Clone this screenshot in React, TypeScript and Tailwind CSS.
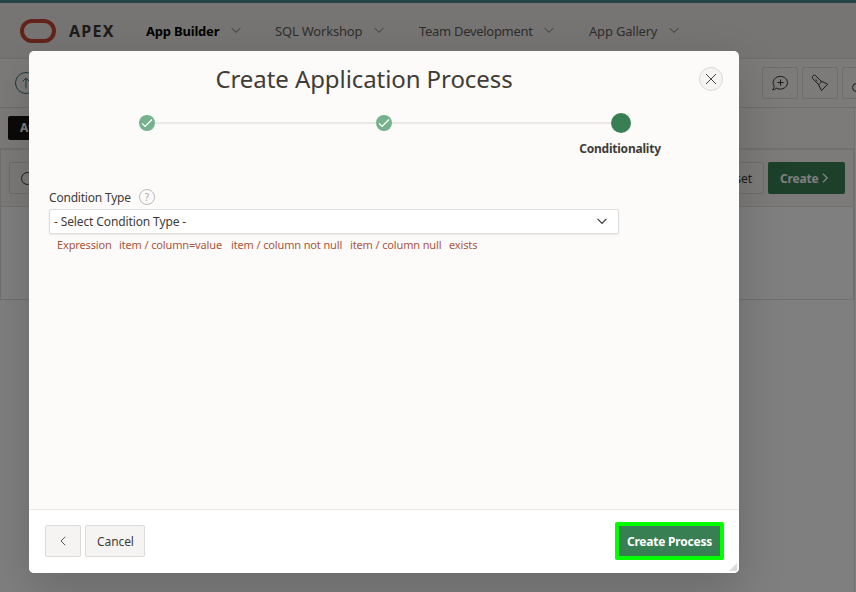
import React from "react";

function Chevron({ className = "" }: { className?: string }) {
  return (
    <svg className={className} width="10" height="7" viewBox="0 0 10 7" fill="none" stroke="currentColor">
      <path d="M.8 1.2 5 5.4l4.200-4.200" />
    </svg>
  );
}

function NavItem({ label, className, text }: { label: string; className: string; text: string }) {
  return (
    <div className={`flex shrink-0 items-center justify-between ${className}`}>
      <span className={`text-[13px] leading-5 whitespace-nowrap ${text}`}>{label}</span>
      <Chevron className="text-[#6f6c69]" />
    </div>
  );
}

function ToolButton({ children }: { children: React.ReactNode }) {
  return (
    <div className="flex h-8 w-9 shrink-0 items-center justify-center rounded-[2px] border border-[#dedbd8] bg-[#f8f6f4] text-[#383532]">
      {children}
    </div>
  );
}

function DoneStep() {
  return (
    <svg className="shrink-0" width="16" height="16" viewBox="0 0 16 16">
      <circle cx="8" cy="8" r="8" fill="#75b18d" />
      <path d="M3 8.400 6.100 11.400 13 4.500" fill="none" stroke="#fff" strokeWidth="1.300" />
    </svg>
  );
}

function Page() {
  return (
    <div className="flex h-full w-full flex-col bg-white">
      <div className="h-[3px] shrink-0 bg-[#4c868f]" />
      <header className="flex h-14 shrink-0 items-center border-b border-[#e0dcd8] bg-[#eeebe8] pl-5">
        <div className="h-6 w-9 rounded-full border-4 border-[#c74634]" />
        <span className="ml-[13px] w-[77px] text-base leading-6 font-bold tracking-[1.3px] text-[#3c3835]">APEX</span>
        <NavItem label="App Builder" className="w-[95px]" text="font-bold text-black tracking-[-0.2px]" />
        <NavItem label="SQL Workshop" className="ml-[34px] w-[109px]" text="text-[#5f5b57] tracking-[-0.2px]" />
        <NavItem label="Team Development" className="ml-[35px] w-[135px]" text="text-[#5f5b57] tracking-[-0.3px]" />
        <NavItem label="App Gallery" className="ml-[35px] w-[90px]" text="text-[#5f5b57] tracking-[-0.2px]" />
      </header>
      <div className="flex h-[49px] shrink-0 items-center justify-between overflow-hidden border-b border-[#e0dcd9] bg-[#f9f7f5] pl-[15px]">
        <div className="flex size-[22px] items-center justify-center rounded-full border border-[#39717b] text-[#39717b]">
          <svg width="10" height="12" viewBox="0 0 10 12" fill="none" stroke="currentColor">
            <path d="M5 11.500V1M1.500 4.500 5 1l3.500 3.500" />
          </svg>
        </div>
        <div className="flex w-[94px] gap-1">
          <ToolButton>
            <svg width="16" height="16" viewBox="0 0 16 16" fill="none" stroke="currentColor" strokeLinejoin="round">
              <path d="M2.300 11.200C1.300 9.800.9 8.500 1.200 6.700 1.800 3.600 4.600 1.400 8.200 1.400c4.100 0 7.300 2.800 7.300 6.300s-3.200 6.400-7.300 6.400c-1.400 0-2.600-.3-3.700-.9-1.100.9-2.400 1.500-3.900 1.600.8-.9 1.600-2.200 1.700-3.600zM8.500 4.500v6M5.500 7.500h6" />
            </svg>
          </ToolButton>
          <ToolButton>
            <svg width="18" height="18" viewBox="0 0 18 18" fill="none" stroke="currentColor" strokeLinejoin="round">
              <path d="M1.600 4.500 7.300 10.200 10.500 16.600 16.600 10.200 10.200 7.100 4.500 1.600C2.600.3.500 2.500 1.600 4.500zM7.300 10.200C9.100 10.100 10.100 9 10.200 7.100M4.700 5.400l1.800 1.800" />
            </svg>
          </ToolButton>
          <div className="flex h-8 w-9 shrink-0 items-center rounded-[2px] border border-[#dedbd8] bg-[#f8f6f4] pt-2 pl-[9px]">
            <div className="size-[9px] rounded-full border border-[#383532]" />
          </div>
        </div>
      </div>
      <div className="min-h-0 flex-1 pr-[1px]">
        <div className="h-full border-r border-[#e6e3e0]">
          <div className="flex h-10 items-center bg-[#f9f7f5] pl-2">
            <div className="flex h-6 w-20 items-center rounded-[2px] bg-[#161513] pl-3 text-xs font-bold text-white">Attributes</div>
          </div>
          <section className="h-[152px] border-t-2 border-r border-b border-l border-[#e3e0dd]">
            <div className="flex h-[57px] items-center justify-between border-b border-[#e3e0dd] bg-[#f9f7f5] pr-2 pl-2">
              <div className="flex h-8 w-48 items-center rounded-[2px] border border-[#dedbd8] pl-[11px]">
                <div className="size-[13px] rounded-full border border-[#383532]" />
              </div>
              <div className="flex gap-1">
                <div className="flex h-8 w-16 items-center justify-end rounded-[2px] border border-[#dedbd8] pt-px pr-[11px] text-xs text-[#383532]">Reset</div>
                <div className="flex h-8 w-[77px] items-center gap-1 rounded-[2px] bg-[#388054] pl-3 text-xs font-bold text-white">
                  <span className="w-[38px] pt-px tracking-[-0.2px]">Create</span>
                  <svg width="7" height="10" viewBox="0 0 7 10" fill="none" stroke="currentColor" strokeWidth="1.400">
                    <path d="m1 .8 4.200 4.200L1 9.200" />
                  </svg>
                </div>
              </div>
            </div>
          </section>
        </div>
      </div>
    </div>
  );
}

function Dialog() {
  return (
    <div className="absolute top-[51px] left-[29px] flex h-[522px] w-[710px] flex-col overflow-hidden rounded-[5px] bg-[#fcfbfa] text-xs text-[#403c38] shadow-[0_16px_48px_rgba(0,0,0,0.18)]">
      <div className="grid h-14 shrink-0 grid-cols-[48px_1fr_48px] items-center">
        <h1 className="col-start-2 text-center text-2xl leading-8 tracking-[-0.08px] whitespace-nowrap">
          <span className="relative -left-[20px]">Create Application Process</span>
        </h1>
        <button className="ml-2 flex size-6 items-center justify-center rounded-full border border-[#dcdad7] bg-[#f5f4f2]">
          <svg width="12" height="12" viewBox="0 0 12 12" stroke="#4a4642">
            <path d="m1 1 10 10M11 1 1 11" />
          </svg>
        </button>
      </div>
      <div className="mt-[6px] flex h-5 shrink-0 items-center pr-[108px] pl-[110px]">
        <DoneStep />
        <div className="h-[2px] w-[221px] bg-[#ebe9e6]" />
        <DoneStep />
        <div className="h-[2px] flex-1 bg-[#ebe9e6]" />
        <div className="size-5 rounded-full bg-[#388054]" />
      </div>
      <div className="mt-[6px] ml-[531px] h-5 w-[120px] text-center leading-5 font-bold tracking-[-0.22px]">Conditionality</div>
      <div className="mt-[26px] ml-5 flex h-6 items-center">
        <label className="w-[90px] pt-px tracking-[-0.2px] whitespace-nowrap">Condition Type</label>
        <span className="flex size-4 items-center justify-center rounded-full border border-[#bcbab7] text-[10px] leading-none text-[#a9a6a3]">?</span>
      </div>
      <div className="ml-5 flex h-[25px] w-[570px] shrink-0 items-center justify-between rounded-[2px] border border-[#dfdddb] bg-white pr-[11px] pl-[4px] shadow-[0_1px_2px_rgba(0,0,0,0.08)]">
        <span className="tracking-[-0.12px]">- Select Condition Type -</span>
        <svg width="10" height="7" viewBox="0 0 10 7" fill="none" stroke="#393632" strokeWidth="1.200">
          <path d="M.6.900 5 5.300 9.400.9" />
        </svg>
      </div>
      <div className="mt-[3px] ml-7 flex h-4 text-[11px] leading-4 tracking-[-0.14px] whitespace-nowrap text-[#aa563a]">
        <span className="w-[62px]">Expression</span>
        <span className="w-[112px]">item / column=value</span>
        <span className="w-[119px]">item / column not null</span>
        <span className="w-[99px]">item / column null</span>
        <span>exists</span>
      </div>
      <footer className="mt-auto flex h-16 shrink-0 items-center gap-1 border-t border-[#e9e6e3] bg-white pr-[15px] pb-[2px] pl-4">
        <button className="flex h-8 w-9 items-center justify-center rounded-[2px] border border-[#dcdad8] bg-[#f5f4f2]">
          <svg width="6" height="10" viewBox="0 0 6 10" fill="none" stroke="#5a5652">
            <path d="M5.200.8 1 5l4.200 4.200" />
          </svg>
        </button>
        <button className="h-8 w-[60px] rounded-[2px] border border-[#dcdad8] bg-[#f5f4f2] pt-[2px] pl-px tracking-[-0.1px]">Cancel</button>
        <button className="ml-auto h-[38px] w-[109px] rounded-[2px] border-4 border-[#00ff00] bg-[#388054] pt-[2px] font-bold tracking-[-0.22px] whitespace-nowrap text-white">Create Process</button>
      </footer>
      <svg className="absolute right-[2px] bottom-[2px]" width="8" height="8" viewBox="0 0 8 8">
        <path d="M8 0v8H0z" fill="#dcdcdc" />
      </svg>
    </div>
  );
}

export default function App() {
  return (
    <main className="relative h-[592px] w-[856px] overflow-hidden font-['Noto_Sans','Open_Sans',sans-serif]">
      <Page />
      <div className="absolute inset-0 bg-black/50" />
      <Dialog />
    </main>
  );
}
